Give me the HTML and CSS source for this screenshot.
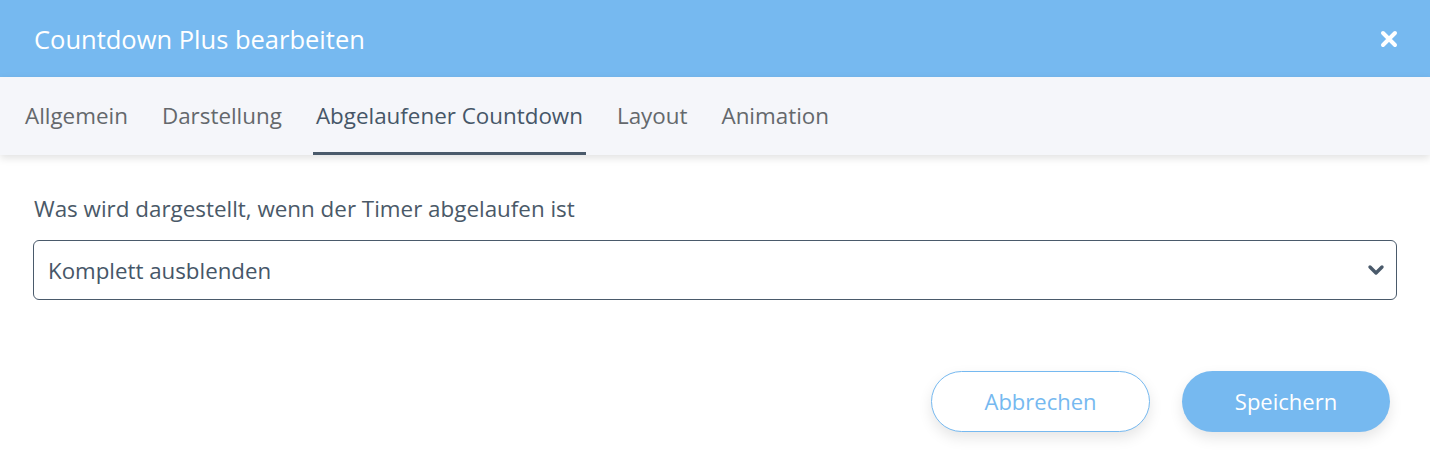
FILE: index.html
```html
<!DOCTYPE html>
<html lang="de">
<head>
<meta charset="utf-8">
<title>Countdown Plus bearbeiten</title>
<link rel="stylesheet" href="styles.css">
</head>
<body>
<div class="dialog">
  <header class="dialog-header">
    <h1 class="dialog-title">Countdown Plus bearbeiten</h1>
    <button class="close-btn" aria-label="Schließen">
      <svg width="18" height="18" viewBox="0 0 18 18"><path d="M3 3 L15 15 M15 3 L3 15" stroke="#fff" stroke-width="4" stroke-linecap="round"/></svg>
    </button>
  </header>
  <nav class="tabs">
    <a class="tab">Allgemein</a>
    <a class="tab">Darstellung</a>
    <a class="tab active">Abgelaufener Countdown</a>
    <a class="tab">Layout</a>
    <a class="tab">Animation</a>
  </nav>
  <main class="dialog-body">
    <label class="field-label">Was wird dargestellt, wenn der Timer abgelaufen ist</label>
    <div class="select">
      <span class="select-value">Komplett ausblenden</span>
      <svg class="select-arrow" width="18" height="12" viewBox="0 0 18 12"><path d="M3 3 L9 9 L15 3" fill="none" stroke="#4a5a6b" stroke-width="3.4" stroke-linecap="round" stroke-linejoin="round"/></svg>
    </div>
    <div class="actions">
      <button class="btn btn-secondary">Abbrechen</button>
      <button class="btn btn-primary">Speichern</button>
    </div>
  </main>
</div>
</body>
</html>
```

FILE: styles.css
```css
* { box-sizing: border-box; }

html, body {
  margin: 0;
  padding: 0;
  background: #fff;
  font-family: "Open Sans", "Noto Sans", sans-serif;
}

.dialog {
  width: 1430px;
  height: 468px;
  background: #fff;
  overflow: hidden;
}

.dialog-header {
  height: 77px;
  background: #76b9f0;
  display: flex;
  align-items: center;
  justify-content: space-between;
  padding: 0 32px 0 34px;
}

.dialog-title {
  margin: 0;
  font-size: 25.5px;
  font-weight: 400;
  color: #fff;
}

.close-btn {
  background: none;
  border: 0;
  padding: 0;
  width: 18px;
  height: 18px;
  display: flex;
  cursor: pointer;
}

.tabs {
  height: 78px;
  background: #f5f6fa;
  display: flex;
  align-items: stretch;
  gap: 28px;
  padding-left: 22px;
  box-shadow: 0 3px 8px rgba(0, 0, 0, 0.12);
  position: relative;
}

.tab {
  display: flex;
  align-items: center;
  padding: 2px 3px 0;
  font-size: 22.4px;
  color: #64686c;
  border-bottom: 3px solid transparent;
  cursor: pointer;
}

.tab.active {
  color: #465668;
  border-bottom-color: #4a5a6b;
}

.dialog-body {
  padding: 39px 33px 0 33px;
}

.field-label {
  display: block;
  padding-left: 1px;
  font-size: 22.4px;
  color: #4a5968;
  line-height: 30px;
  margin-bottom: 16px;
}

.select {
  height: 60px;
  border: 1px solid #4a5a6b;
  border-radius: 6px;
  display: flex;
  align-items: center;
  justify-content: space-between;
  padding: 0 11px 0 14px;
}

.select-value {
  font-size: 22.3px;
  color: #465668;
}

.actions {
  display: flex;
  justify-content: flex-end;
  gap: 32px;
  margin-top: 71px;
  padding-right: 7px;
}

.btn {
  height: 61px;
  border-radius: 31px;
  padding-bottom: 2px;
  font-family: inherit;
  font-size: 22px;
  cursor: pointer;
  box-shadow: 0 6px 14px rgba(0, 0, 0, 0.1);
}

.btn-secondary {
  width: 219px;
  background: #fff;
  border: 1px solid #76b9f0;
  color: #76b9f0;
}

.btn-primary {
  width: 208px;
  background: #76b9f0;
  border: 0;
  color: #fff;
}
```
